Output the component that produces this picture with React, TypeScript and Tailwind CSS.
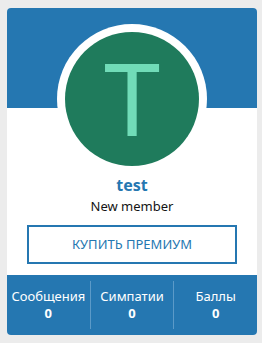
export default function App() {
  const stats = [
    { label: "Сообщения", value: "0" },
    { label: "Симпатии", value: "0" },
    { label: "Баллы", value: "0" },
  ];
  return (
    <div
      className="w-[262px] h-[343px] bg-[#ececec] pt-[8px] pl-[7px]"
      style={{ fontFamily: '"Noto Sans", "Open Sans", sans-serif' }}
    >
      <div className="w-[250px] bg-white rounded-[4px] overflow-hidden">
        <div className="relative h-[100px] bg-[#2577b1]">
          <div className="absolute left-[50px] top-[16px] w-[150px] h-[150px] rounded-full bg-white p-[8px]">
            <div className="w-full h-full rounded-full bg-[#1f7b5c] flex items-center justify-center overflow-hidden">
              <span
                className="text-[101px] leading-none text-[#71dcb8] font-normal mt-[-4px]"
                style={{ fontFamily: '"Noto Sans", sans-serif' }}
              >
                T
              </span>
            </div>
          </div>
        </div>
        <div className="pt-[66px] flex flex-col items-center">
          <div className="text-[16px] font-bold text-[#2577b1] leading-[22px]">test</div>
          <div className="text-[13px] text-[#141414] leading-[18px] mt-[1px]">New member</div>
          <div className="mt-[10px] w-[210px] h-[39px] border-2 border-[#2577b1] flex items-center justify-center text-[13px] text-[#2577b1]">
            КУПИТЬ ПРЕМИУМ
          </div>
          <div className="h-[11px]" />
        </div>
        <div className="bg-[#2577b1] h-[60px] flex items-stretch py-[6px]">
          {stats.map((s, i) => (
            <div
              key={s.label}
              className={
                "flex-1 flex flex-col items-center justify-center text-white " +
                (i > 0 ? "border-l border-[#5b9ac8]" : "")
              }
            >
              <div className="text-[13px] leading-[17px]">{s.label}</div>
              <div className="text-[13px] font-bold leading-[17px]">{s.value}</div>
            </div>
          ))}
        </div>
      </div>
    </div>
  );
}
